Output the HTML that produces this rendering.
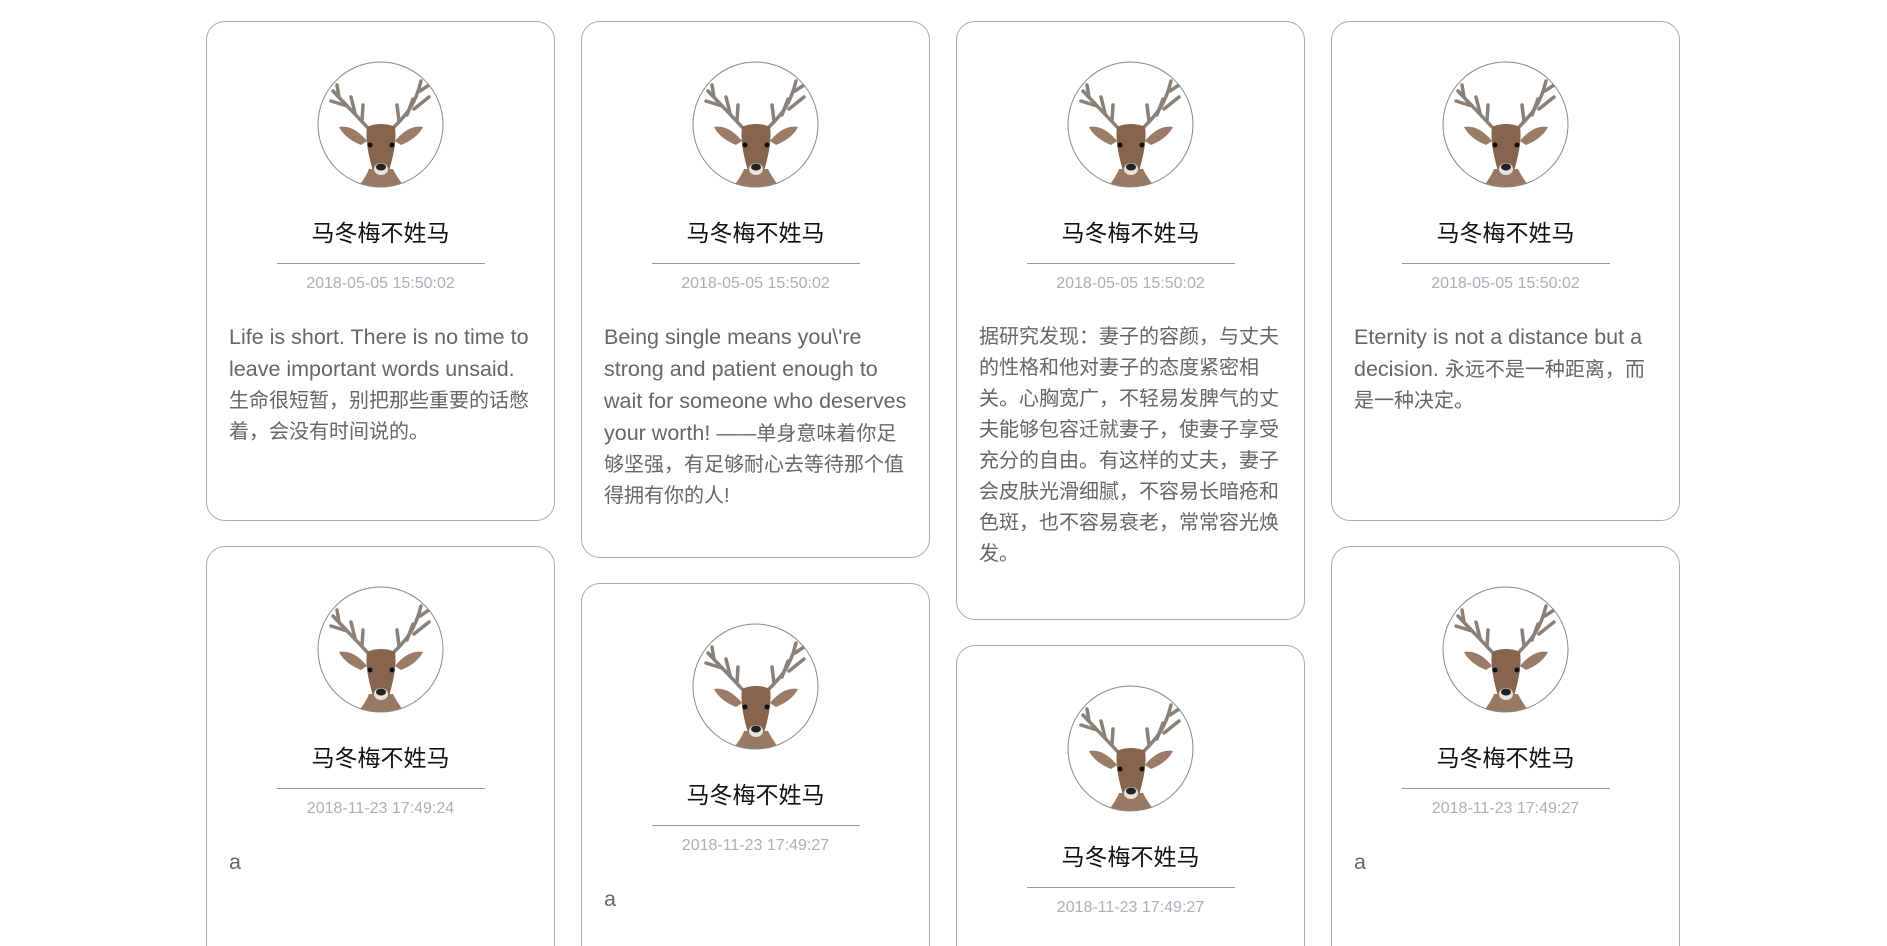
<!DOCTYPE html>
<html><head><meta charset="utf-8"><style>
html,body{margin:0;padding:0;width:1887px;height:946px;overflow:hidden;background:#fff}
#w{position:relative;width:1887px;height:946px;overflow:hidden;font-family:"Liberation Sans","Noto Sans CJK SC",sans-serif}
.c{position:absolute;width:347px;border:1px solid #aaa;border-radius:19px;background:#fff}
.o{border-bottom:none;border-radius:19px 19px 0 0}
.av{position:absolute;left:110px;top:39px;width:127px;height:127px}
.n{position:absolute;left:0;width:347px;top:196px;text-align:center;font-size:23px;color:#111;line-height:30px}
.ln{position:absolute;left:70px;width:208px;top:241px;border-top:1px solid #999}
.d{position:absolute;left:0;width:347px;top:252px;text-align:center;font-size:16px;color:#aab0b8;line-height:20px}
.t{position:absolute;left:22px;top:300px;font-size:20px;line-height:31px;color:#666;white-space:nowrap}
.t b{font-weight:normal;font-size:21.5px}
</style></head><body>
<svg width="0" height="0" style="position:absolute"><defs>
<clipPath id="cp"><circle cx="63.5" cy="63.5" r="62.5"/></clipPath>
<symbol id="deer" viewBox="0 0 127 127">
<g clip-path="url(#cp)">
<rect width="127" height="127" fill="#fff"/>
<g fill="none" stroke="#8a8078" stroke-width="3.5" stroke-linecap="round">
<path d="M50 66 C40 55 30 45 16 30"/><path d="M30 45 L14 40"/><path d="M38 52 L34 36"/><path d="M45 60 L46 44"/><path d="M22 36 L20 24"/>
<path d="M77 66 C88 55 98 45 104 20"/><path d="M97 48 L112 36"/><path d="M90 54 L96 38"/><path d="M82 60 L80 44"/><path d="M103 30 L112 24"/>
</g>
<path d="M22 66 C32 64 42 70 50 80 L44 84 C34 80 26 74 22 66Z" fill="#9a7c68"/>
<path d="M106 66 C96 64 86 70 78 80 L84 84 C94 80 102 74 106 66Z" fill="#9a7c68"/>
<path d="M50 66 C58 62 70 62 78 66 C80 80 76 96 72 110 C68 116 60 116 56 110 C52 96 48 80 50 66Z" fill="#86644e"/>
<path d="M52 108 C48 118 42 124 38 130 L90 130 C86 124 80 116 76 108Z" fill="#987a64"/>
<ellipse cx="64" cy="108" rx="7" ry="6" fill="#e9e3dc"/>
<ellipse cx="64" cy="106" rx="5" ry="3.5" fill="#222"/>
<circle cx="53" cy="84" r="2.5" fill="#111"/><circle cx="75" cy="84" r="2.5" fill="#111"/>
</g>
<circle cx="63.5" cy="63.5" r="62.5" fill="none" stroke="#888" stroke-width="1"/>
</symbol></defs></svg>
<div id="w">
<div class="c" style="left:206px;top:21px;height:498px">
<svg class="av"><use href="#deer"/></svg><div class="n">马冬梅不姓马</div><div class="ln"></div><div class="d">2018-05-05 15:50:02</div>
<div class="t"><b>Life is short. There is no time to</b><br><b>leave important words unsaid.</b><br>生命很短暂，别把那些重要的话憋<br>着，会没有时间说的。</div></div>

<div class="c" style="left:581px;top:21px;height:535px">
<svg class="av"><use href="#deer"/></svg><div class="n">马冬梅不姓马</div><div class="ln"></div><div class="d">2018-05-05 15:50:02</div>
<div class="t"><b>Being single means you\'re</b><br><b>strong and patient enough to</b><br><b>wait for someone who deserves</b><br><b>your worth! </b>——单身意味着你足<br>够坚强，有足够耐心去等待那个值<br>得拥有你的人!</div></div>

<div class="c" style="left:956px;top:21px;height:597px">
<svg class="av"><use href="#deer"/></svg><div class="n">马冬梅不姓马</div><div class="ln"></div><div class="d">2018-05-05 15:50:02</div>
<div class="t">据研究发现：妻子的容颜，与丈夫<br>的性格和他对妻子的态度紧密相<br>关。心胸宽广，不轻易发脾气的丈<br>夫能够包容迁就妻子，使妻子享受<br>充分的自由。有这样的丈夫，妻子<br>会皮肤光滑细腻，不容易长暗疮和<br>色斑，也不容易衰老，常常容光焕<br>发。</div></div>

<div class="c" style="left:1331px;top:21px;height:498px">
<svg class="av"><use href="#deer"/></svg><div class="n">马冬梅不姓马</div><div class="ln"></div><div class="d">2018-05-05 15:50:02</div>
<div class="t"><b>Eternity is not a distance but a</b><br><b>decision. </b>永远不是一种距离，而<br>是一种决定。</div></div>

<div class="c o" style="left:206px;top:546px;height:399px">
<svg class="av"><use href="#deer"/></svg><div class="n">马冬梅不姓马</div><div class="ln"></div><div class="d">2018-11-23 17:49:24</div>
<div class="t"><b>a</b></div></div>

<div class="c o" style="left:581px;top:583px;height:362px">
<svg class="av"><use href="#deer"/></svg><div class="n">马冬梅不姓马</div><div class="ln"></div><div class="d">2018-11-23 17:49:27</div>
<div class="t"><b>a</b></div></div>

<div class="c o" style="left:956px;top:645px;height:300px">
<svg class="av"><use href="#deer"/></svg><div class="n">马冬梅不姓马</div><div class="ln"></div><div class="d">2018-11-23 17:49:27</div>
<div class="t"><b>a</b></div></div>

<div class="c o" style="left:1331px;top:546px;height:399px">
<svg class="av"><use href="#deer"/></svg><div class="n">马冬梅不姓马</div><div class="ln"></div><div class="d">2018-11-23 17:49:27</div>
<div class="t"><b>a</b></div></div>
</div>
</body></html>
